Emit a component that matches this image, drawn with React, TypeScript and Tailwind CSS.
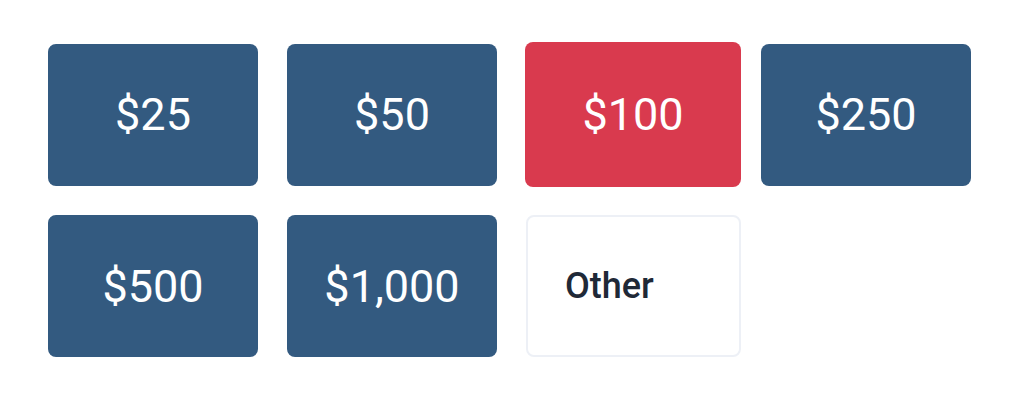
import React, { useState } from 'react';

const AMOUNTS = [25, 50, 100, 250, 500, 1000];

export default function App() {
  const [selected, setSelected] = useState<number | 'other'>(100);

  const cell = (amount: number, extra = '') => {
    const active = selected === amount;
    return (
      <button
        key={amount}
        onClick={() => setSelected(amount)}
        className={`flex items-center justify-center rounded-lg text-white text-[45px] leading-none ${
          active ? 'bg-[#d93a4e] w-[216px] h-[145px]' : 'bg-[#335a80] w-[210px] h-[142px]'
        } ${extra}`}
      >
        ${amount.toLocaleString('en-US')}
      </button>
    );
  };

  return (
    <div
      className="w-[1026px] h-[418px] bg-white pl-[48px] pt-[42px]"
      style={{ fontFamily: 'Roboto, "Liberation Sans", sans-serif' }}
    >
      <div className="flex flex-col gap-[28px]">
        <div className="flex items-center h-[145px]">
          {cell(AMOUNTS[0])}
          {cell(AMOUNTS[1], 'ml-[29px]')}
          {cell(AMOUNTS[2], 'ml-[28px]')}
          {cell(AMOUNTS[3], 'ml-[20px]')}
        </div>
        <div className="flex items-center">
          {cell(AMOUNTS[4])}
          {cell(AMOUNTS[5], 'ml-[29px]')}
          <button
            onClick={() => setSelected('other')}
            className="ml-[29px] w-[215px] h-[142px] rounded-lg border-2 border-[#edf0f6] bg-white flex items-center pl-[37px] text-[36px] font-medium text-[#1f2937]"
          >
            Other
          </button>
        </div>
      </div>
    </div>
  );
}
